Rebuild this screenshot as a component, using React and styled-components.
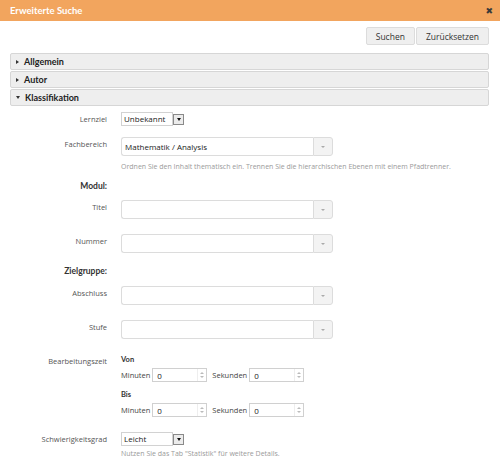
import React from 'react';
import styled, { createGlobalStyle } from 'styled-components';

const Global = createGlobalStyle`
  html, body { margin: 0; padding: 0; background: #fff; }
  body { font-family: "Open Sans", "Liberation Sans", sans-serif; color: #333; }
  * { box-sizing: border-box; }
`;

const Dialog = styled.div`
  width: 500px;
  height: 461px;
  background: #fff;
  overflow: hidden;
`;

const Header = styled.div`
  height: 21px;
  background: #f2a55e;
  display: flex;
  align-items: center;
  justify-content: space-between;
  padding: 0 7px 0 10px;
`;

const Title = styled.span`
  font-family: Lato, "Open Sans", sans-serif;
  font-weight: 700;
  font-size: 9.5px;
  color: #fff;
`;

const Close = styled.span`
  font-size: 9px;
  font-weight: 700;
  color: #3a3a3a;
  font-family: "DejaVu Sans", sans-serif;
`;

const Body = styled.div`
  padding: 6px 11px 0 10px;
`;

const Toolbar = styled.div`
  display: flex;
  justify-content: flex-end;
  gap: 1px;
`;

const Button = styled.button`
  height: 18px;
  padding: 0 9px;
  font-family: "Open Sans", sans-serif;
  font-size: 8.5px;
  color: #333;
  background: #efefef;
  border: 1px solid #dcdcdc;
  border-radius: 2px;
`;

const Panels = styled.div`
  margin-top: 8px;
  display: flex;
  flex-direction: column;
  gap: 1px;
`;

const PanelHead = styled.div`
  height: 17px;
  border: 1px solid #d6d6d6;
  background: #eeeeee;
  border-radius: 2px;
  display: flex;
  align-items: center;
  padding-left: 5px;
  gap: 5px;
  font-family: Lato, "Open Sans", sans-serif;
  font-weight: 700;
  font-size: 9px;
  color: #222;
`;

const Caret = styled.span`
  width: 0;
  height: 0;
  ${p => p.$open
    ? `border-left: 2.5px solid transparent; border-right: 2.5px solid transparent; border-top: 3px solid #333;`
    : `border-top: 2.5px solid transparent; border-bottom: 2.5px solid transparent; border-left: 3px solid #333;`}
`;

const Form = styled.div`
  display: flex;
  flex-direction: column;
`;

const Row = styled.div`
  display: grid;
  grid-template-columns: 97px 1fr;
  column-gap: 14px;
  align-items: start;
  margin-top: ${p => p.$mt}px;
`;

const Label = styled.div`
  text-align: right;
  font-size: 7.5px;
  color: #555;
  line-height: ${p => p.$lh || 14}px;
`;

const SectionLabel = styled.div`
  text-align: right;
  font-family: Lato, "Open Sans", sans-serif;
  font-weight: 700;
  font-size: 8.5px;
  color: #333;
  line-height: 12px;
`;

const Hint = styled.div`
  font-size: 7px;
  color: #9a9a9a;
  line-height: 9px;
  white-space: nowrap;
`;

const SelectBox = styled.div`
  display: flex;
  width: 63px;
  height: 14px;
`;

const SelectText = styled.div`
  flex: 1;
  border: 1px solid #d2d2d2;
  background: #fff;
  font-size: 8px;
  color: #222;
  line-height: 12px;
  padding-left: 2px;
`;

const SelectArrow = styled.div`
  width: 11px;
  height: 11px;
  margin-top: 1.5px;
  border: 1px solid #8a8a8a;
  background: #ececec;
  display: flex;
  align-items: center;
  justify-content: center;
  &::after {
    content: '';
    border-left: 2.5px solid transparent;
    border-right: 2.5px solid transparent;
    border-top: 3px solid #111;
  }
`;

const Combo = styled.div`
  display: flex;
  width: 212px;
  height: 19px;
`;

const ComboInput = styled.div`
  flex: 1;
  border: 1px solid #dcdcdc;
  border-right: none;
  border-radius: 3px 0 0 3px;
  background: #fff;
  font-size: 8px;
  color: #222;
  line-height: 17px;
  padding-left: 3px;
`;

const ComboButton = styled.div`
  width: 20px;
  border: 1px solid #dcdcdc;
  border-radius: 0 3px 3px 0;
  background: #f3f3f3;
  display: flex;
  align-items: center;
  justify-content: center;
  &::after {
    content: '';
    border-left: 2px solid transparent;
    border-right: 2px solid transparent;
    border-top: 2px solid #aaa;
  }
`;

const TimeBlock = styled.div`
  display: flex;
  flex-direction: column;
`;

const TimeHead = styled.div`
  font-family: Lato, "Open Sans", sans-serif;
  font-weight: 700;
  font-size: 7.5px;
  color: #333;
  line-height: 10px;
  margin-top: ${p => p.$mt || 0}px;
`;

const TimeRow = styled.div`
  display: flex;
  align-items: center;
  margin-top: 3px;
  height: 14px;
`;

const TimeLabel = styled.span`
  font-size: 7.5px;
  color: #444;
  margin-right: ${p => p.$mr}px;
  margin-left: ${p => p.$ml || 0}px;
`;

const Spin = styled.div`
  display: flex;
  width: 55px;
  height: 14px;
  border: 1px solid #d0d0d0;
  background: #fff;
`;

const SpinValue = styled.div`
  flex: 1;
  font-size: 8px;
  color: #222;
  line-height: 14px;
  padding-left: 4px;
`;

const SpinArrows = styled.div`
  width: 9px;
  display: flex;
  flex-direction: column;
  align-items: center;
  justify-content: center;
  gap: 2px;
  border-left: 1px solid #eee;
`;

const Tri = styled.span`
  width: 0;
  height: 0;
  border-left: 2px solid transparent;
  border-right: 2px solid transparent;
  ${p => p.$up ? 'border-bottom: 2px solid #bbb;' : 'border-top: 2px solid #bbb;'}
`;

const Select = ({ value }) => (
  <SelectBox>
    <SelectText>{value}</SelectText>
    <SelectArrow />
  </SelectBox>
);

const ComboField = ({ value }) => (
  <Combo>
    <ComboInput>{value}</ComboInput>
    <ComboButton />
  </Combo>
);

const SpinField = ({ value }) => (
  <Spin>
    <SpinValue>{value}</SpinValue>
    <SpinArrows>
      <Tri $up />
      <Tri />
    </SpinArrows>
  </Spin>
);

const TimeLine = () => (
  <TimeRow>
    <TimeLabel $mr={2}>Minuten</TimeLabel>
    <SpinField value="0" />
    <TimeLabel $ml={5} $mr={2}>Sekunden</TimeLabel>
    <SpinField value="0" />
  </TimeRow>
);

export default function App() {
  return (
    <Dialog>
      <Global />
      <Header>
        <Title>Erweiterte Suche</Title>
        <Close>✖</Close>
      </Header>
      <Body>
        <Toolbar>
          <Button>Suchen</Button>
          <Button>Zurücksetzen</Button>
        </Toolbar>
        <Panels>
          <PanelHead><Caret />Allgemein</PanelHead>
          <PanelHead><Caret />Autor</PanelHead>
          <PanelHead><Caret $open />Klassifikation</PanelHead>
        </Panels>
        <Form>
          <Row $mt={6}>
            <Label>Lernziel</Label>
            <Select value="Unbekannt" />
          </Row>
          <Row $mt={11}>
            <Label $lh={14}>Fachbereich</Label>
            <ComboField value="Mathematik / Analysis" />
          </Row>
          <Row $mt={6}>
            <span />
            <Hint>Ordnen Sie den Inhalt thematisch ein. Trennen Sie die hierarchischen Ebenen mit einem Pfadtrenner.</Hint>
          </Row>
          <Row $mt={9}>
            <SectionLabel>Modul:</SectionLabel>
          </Row>
          <Row $mt={8}>
            <Label $lh={14}>Titel</Label>
            <ComboField />
          </Row>
          <Row $mt={15}>
            <Label $lh={14}>Nummer</Label>
            <ComboField />
          </Row>
          <Row $mt={12}>
            <SectionLabel>Zielgruppe:</SectionLabel>
          </Row>
          <Row $mt={9}>
            <Label $lh={14}>Abschluss</Label>
            <ComboField />
          </Row>
          <Row $mt={15}>
            <Label $lh={14}>Stufe</Label>
            <ComboField />
          </Row>
          <Row $mt={16}>
            <Label $lh={12}>Bearbeitungszeit</Label>
            <TimeBlock>
              <TimeHead>Von</TimeHead>
              <TimeLine />
              <TimeHead $mt={8}>Bis</TimeHead>
              <TimeLine />
            </TimeBlock>
          </Row>
          <Row $mt={15}>
            <Label>Schwierigkeitsgrad</Label>
            <Select value="Leicht" />
          </Row>
          <Row $mt={3}>
            <span />
            <Hint>Nutzen Sie das Tab "Statistik" für weitere Details.</Hint>
          </Row>
        </Form>
      </Body>
    </Dialog>
  );
}
